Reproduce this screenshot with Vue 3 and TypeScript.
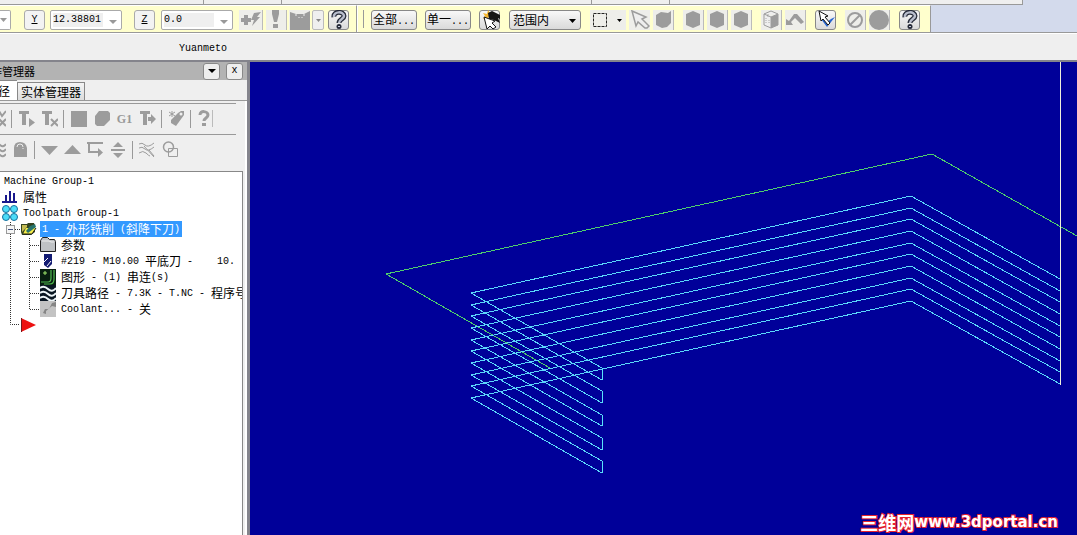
<script setup lang="ts">
import { ref } from 'vue'

interface Part { text: string; cjk?: boolean }
interface TreeRow { id: string; level: number; icon?: string; parts: Part[]; selected?: boolean }
interface Tool { icon: string; label: string; cls?: string }

const yValue = ref('12.38801')
const zValue = ref('0.0')
const range = ref('in')

const hexagon = '<path d="M10 1 17 4V15L10 18 3 15V4Z" fill="#9c9c9c"/>'
const tee = '<path d="M1 1H11V4H8V15H4V4H1Z" fill="#9c9c9c"/>'

const icons: Record<string, string> = {
  flash: '<path d="M4 5H8V8H11V12H8V15H4V12H1V8H4ZM14 3 21 2 17 7H20L12 16 14 10H11Z" fill="#9c9c9c"/>',
  bang: '<path d="M6 0H13V4L11 12H8L6 4ZM7 14H12V18H7Z" fill="#9c9c9c"/>',
  cam: '<path d="M0 2 6 4H14L20 1V20H0Z" fill="#9c9c9c"/><path d="M6 4V6M9 7V8M12 7V8M14 4V6" stroke="#eee"/>',
  help: '<path d="M5 7C4 1 15 1 15 6C15 9 10 9 10 13" fill="none" stroke="#252a38" stroke-width="5"/><path d="M5 7C4 1 15 1 15 6C15 9 10 9 10 13" fill="none" stroke="#b8bdcc" stroke-width="2.500"/><circle cx="10" cy="16.500" r="2.500" fill="#252a38"/><path d="M9 16.500H11" stroke="#c8ccdb"/>',
  chain: '<path d="M3 3 7 4 8 0 11 4 8 8 3 9 5 6Z" fill="#f6b62f"/><path d="M8 3 12 1 20 5V9L18 8 20 13 14 10 9 9Z" fill="#161616"/><path d="M4 7 7 19 10 16 13 19 16 17 12 13 15 11Z" fill="#fff" stroke="#111"/>',
  marquee: '<rect x="3.5" y="3.5" width="13" height="13" fill="none" stroke="#222" stroke-dasharray="3 1"/>',
  cursor: '<path d="M2 1 16 7 12 9 19 16 17 18 15 18 8 12 6 16Z" fill="#eee" stroke="#9c9c9c" stroke-width="1.5"/>',
  solid: '<path d="M3 5 8 2 15 3 18 1V13L14 17 9 18 3 15Z" fill="#9c9c9c"/>',
  hexagon,
  cube: '<path d="M10 1 17 4V15L10 18 3 15V4ZM3 4 10 7 17 4M10 7V18" fill="#eee" stroke="#9c9c9c"/><path d="M10 7 17 4V15L10 18Z" fill="#9c9c9c"/><path d="M5 8V13M7 4V8M8 10V14" stroke="#aaa" stroke-dasharray="1 1"/>',
  back: '<path d="M1 9V15H8L6 12 10 8 16 14 19 12 12 4H9L4 11Z" fill="#9c9c9c"/>',
  verify: '<path d="M5 9 11 17 19 7 15 9 11 12 7 8Z" fill="#2765cf"/><path d="M3 1 12 6 9 7 14 13 12 15 7 9 5 11Z" fill="#fff" stroke="#111"/>',
  no: '<circle cx="10" cy="10" r="7" fill="none" stroke="#9c9c9c" stroke-width="2"/><path d="M5 15 15 5" stroke="#9c9c9c" stroke-width="2"/>',
  disc: '<circle cx="10" cy="10" r="10" fill="#9c9c9c"/>',
  teePlay: tee + '<path d="M11 8 17 12.5 11 17Z" fill="#9c9c9c"/>',
  teeX: tee + '<path d="M10 9 17 16M17 9 10 16" stroke="#9c9c9c" stroke-width="2"/>',
  teeArrow: tee + '<path d="M9 7H12V4L17 9 12 14V11H9Z" fill="#9c9c9c"/>',
  cutX: '<path d="M10 1 13 6 17 1M10 9 17 16M17 9 10 16" fill="none" stroke="#9c9c9c" stroke-width="2"/>',
  square: '<path d="M1 1H17V17H1Z" fill="#9c9c9c"/>',
  block: '<path d="M6 1H15L17 3V10L11 16H4L2 14V6Z" fill="#9c9c9c"/>',
  pen: '<path d="M10 3 13 1H16V5L8 16 3 13V10Z" fill="#9c9c9c"/><path d="M1 2 7 6M4 1V7M1 6 7 2" stroke="#9c9c9c"/><circle cx="13" cy="4" r="1.5" fill="#eee"/>',
  ask: '<path d="M3 5C3 0 11 1 11 5C11 8 7 8 7 11" fill="none" stroke="#9c9c9c" stroke-width="3"/><rect x="5" y="13" width="4" height="3" fill="#9c9c9c"/><path d="M15.5 0V17" stroke="#bbb"/>',
  wave: '<path d="M5 4Q8 1 11 4T17 3M5 9Q8 6 11 9T17 8M5 14Q8 11 11 14T17 13" fill="none" stroke="#9c9c9c" stroke-width="2"/>',
  lock: '<path d="M2 16V7Q2 1 8 1T15 7V16Z" fill="#9c9c9c"/><path d="M5 6Q5 3 8 3T11 6M11 7V8" fill="none" stroke="#eee"/>',
  down: '<path d="M0 5H17L8.500 14Z" fill="#9c9c9c"/>',
  up: '<path d="M0 13H17L8.500 4Z" fill="#9c9c9c"/>',
  loop: '<path d="M0 2H16M2 2V11H13" fill="none" stroke="#9c9c9c" stroke-width="2"/><path d="M11 7 16 11.500 11 16Z" fill="#9c9c9c"/>',
  split: '<path d="M3 6 8 1 13 6ZM1 8H15V10H1ZM3 12 8 17 13 12Z" fill="#9c9c9c"/>',
  waves: '<path d="M0 3Q3 1 6 4T15 2M0 7Q3 5 6 8T15 6M0 12Q4 9 7 12T11 15M10 9 15 15M5 5 15 16" fill="none" stroke="#9c9c9c"/>',
  shapes: '<circle cx="6.500" cy="6" r="5" fill="none" stroke="#9c9c9c" stroke-width="1.500"/><path d="M6.500 7.500H15.500V15.500H6.500Z" fill="none" stroke="#9c9c9c"/>',
  bars: '<path d="M0 13H15M4 6V13M8 2V13M12 4V13" stroke="#18188c" stroke-width="2" fill="none"/>',
  dots: '<g fill="#4cdcf8" stroke="#176f9c"><circle cx="4" cy="4" r="3.500"/><circle cx="12" cy="4" r="3.500"/><circle cx="4" cy="12" r="3.500"/><circle cx="12" cy="12" r="3.500"/></g>',
  folderOpen: '<path d="M0 3H6L7 2H13L14 5V11L10 14H1L0 11Z" fill="#34421f"/><path d="M1 4H6V6L1 11Z" fill="#c4bb53"/><path d="M5 7H15L11 13H2Z" fill="#f6ed49"/><path d="M9 5 14 3 15 6 7 12 5 10Z" fill="#28736b"/><path d="M2 13H11L15 7" fill="none" stroke="#191919"/>',
  folder: '<path d="M.5 3.500 2.500.500H7.500L9.500 2.500H14.500L15.500 4.500V14.500H.500Z" fill="#bfc2c5" stroke="#222"/><path d="M2 4H9L11 5H14" fill="none" stroke="#eee"/>',
  mill: '<path d="M4 1H12V11L8 15 4 12Z" fill="#131b73"/><path d="M4 9 8 5M7 13 11 8" stroke="#fff"/>',
  geometry: '<path d="M0 0H16V16H0Z" fill="#071d10"/><path d="M1 13H8Q11 13 11 9V1M4 15H10Q14 15 14 10V1" fill="none" stroke="#51bb50" stroke-width="1.200"/><path d="M3 4H7M5 2V6" stroke="#9ce36a"/>',
  path: '<path d="M0 0H16V16H0Z" fill="#091622"/><path d="M0 3Q4 0 8 4T16 3M0 8Q4 5 8 9T16 8M0 13Q4 10 8 14T16 13" fill="none" stroke="#edf5f8" stroke-width="2"/>',
  coolant: '<path d="M0 0H16V16H0Z" fill="#c3c3c3"/><path d="M16 1V6L12 5 6 10V13L3 12 5 8 9 8 12 2Z" fill="#858585"/>',
  end: '<path d="M0 1 15 8 0 15Z" fill="#ed1111"/><path d="M.500 1V15" stroke="#77181b"/>',
}

const selectTools: Tool[] = [
  { icon: 'cursor', label: '选择', cls: 'flat' },
  { icon: 'solid', label: '实体', cls: 'flat sep' },
  { icon: 'hexagon', label: '边界', cls: 'flat sep far' },
  { icon: 'hexagon', label: '面', cls: 'flat sep' },
  { icon: 'hexagon', label: '主体', cls: 'flat sep' },
  { icon: 'cube', label: '背面', cls: 'flat sep far' },
  { icon: 'back', label: '返回', cls: 'flat sep' },
  { icon: 'verify', label: '验证', cls: 'raised far' },
  { icon: 'no', label: '取消', cls: 'flat sep far' },
  { icon: 'disc', label: '结束', cls: 'flat sep' },
  { icon: 'help', label: '帮助', cls: 'raised far' },
]

const topTools: string[] = ['cutX', '|', 'teePlay', 'teeX', '|', 'square', 'block', 'G1', 'teeArrow', '|', 'pen', '|', 'ask']
const lowTools: string[] = ['wave', 'lock', '|', 'down', 'up', 'loop', 'split', '|', 'waves', 'shapes']

const c = (text: string): Part => ({ text, cjk: true })
const l = (text: string): Part => ({ text })

const rows: TreeRow[] = [
  { id: 'machine', level: 0, parts: [l('Machine Group-1')] },
  { id: 'props', level: 1, icon: 'bars', parts: [c('属性')] },
  { id: 'group', level: 1, icon: 'dots', parts: [l('Toolpath Group-1')] },
  { id: 'op', level: 2, icon: 'folderOpen', selected: true, parts: [l('1 - '), c('外形铣削'), l(' ('), c('斜降下刀'), l(')')] },
  { id: 'params', level: 3, icon: 'folder', parts: [c('参数')] },
  { id: 'tool', level: 3, icon: 'mill', parts: [l('#219 - M10.00 '), c('平底刀'), l(' -    10.')] },
  { id: 'geo', level: 3, icon: 'geometry', parts: [c('图形'), l(' - (1) '), c('串连'), l('(s)')] },
  { id: 'nc', level: 3, icon: 'path', parts: [c('刀具路径'), l(' - 7.3K - T.NC - '), c('程序号')] },
  { id: 'cool', level: 3, icon: 'coolant', parts: [l('Coolant... - '), c('关')] },
  { id: 'insert', level: 2, icon: 'end', parts: [] },
]

const levels = Array.from({ length: 10 }, (_, i) => Math.round((i * 35) / 3))
const passes = levels.map(d => `602,${368 + d} 471,${293 + d} 911,${196 + d} 1060,${279 + d}`)
const links = [0, 2, 4, 6, 8].map(i => ({ y1: 368 + levels[i], y2: 368 + levels[i + 1] }))
</script>

<template>
  <div class="app">
    <div class="strip">
      <div class="strip-bar"><i class="w1"></i><i class="w2"></i><i class="w3"></i><i class="w4"></i><i class="w5"></i></div>
    </div>

    <header class="toolbar">
      <div class="group coords">
        <button class="stub" aria-label="X"><svg width="7" height="4" viewBox="0 0 7 4"><path d="M0 0H7L3.500 4Z" fill="#999" /></svg></button>
        <label class="axis" for="y-field"><u>Y</u></label>
        <div class="combo">
          <input id="y-field" v-model="yValue" />
          <button aria-label="Y 历史"><svg width="8" height="4" viewBox="0 0 8 4"><path d="M0 0H8L4 4Z" fill="#999" /></svg></button>
        </div>
        <label class="axis z" for="z-field"><u>Z</u></label>
        <div class="combo">
          <input id="z-field" v-model="zValue" />
          <button aria-label="Z 历史"><svg width="8" height="4" viewBox="0 0 8 4"><path d="M0 0H8L4 4Z" fill="#999" /></svg></button>
        </div>
        <button class="tool flat sep flash" aria-label="快速点"><svg width="22" height="20" viewBox="0 0 22 20" v-html="icons.flash" /></button>
        <button class="tool flat sep" aria-label="相对点"><svg width="20" height="20" viewBox="0 0 20 20" v-html="icons.bang" /></button>
        <button class="tool flat" aria-label="配置"><svg width="20" height="20" viewBox="0 0 20 20" v-html="icons.cam" /></button>
        <button class="drop" aria-label="更多"><svg width="5" height="3" viewBox="0 0 5 3"><path d="M0 0H5L2.500 3Z" fill="#888" /></svg></button>
        <button class="tool raised" aria-label="帮助"><svg width="20" height="20" viewBox="0 0 20 20" v-html="icons.help" /></button>
      </div>
      <div class="group selection">
        <button class="word"><span class="cjk">全部</span>...</button>
        <button class="word"><span class="cjk">单一</span>...</button>
        <button class="tool raised" aria-label="串连选择"><svg width="20" height="20" viewBox="0 0 20 20" v-html="icons.chain" /></button>
        <div class="range">
          <select v-model="range" aria-label="选择范围"><option value="in">范围内</option></select>
          <svg width="7" height="4" viewBox="0 0 7 4"><path d="M0 0H7L3.500 4Z" fill="#000" /></svg>
        </div>
        <button class="tool flat marquee" aria-label="窗选">
          <svg width="20" height="20" viewBox="0 0 20 20" v-html="icons.marquee" />
          <svg width="5" height="3" viewBox="0 0 5 3"><path d="M0 0H5L2.500 3Z" fill="#000" /></svg>
        </button>
        <button v-for="(t, i) in selectTools" :key="i" class="tool" :class="t.cls" :aria-label="t.label">
          <svg width="20" height="20" viewBox="0 0 20 20" v-html="icons[t.icon]" />
        </button>
      </div>
    </header>

    <div class="ribbon">Yuanmeto</div>

    <main class="work">
      <aside class="manager">
        <div class="title">
          <span class="cjk caption">作管理器</span>
          <button aria-label="菜单"><svg width="8" height="4" viewBox="0 0 8 4"><path d="M0 0H8L4 4Z" fill="#000" /></svg></button>
          <button aria-label="关闭">x</button>
        </div>
        <nav class="tabs cjk">
          <button class="tab active"><span>径</span></button>
          <button class="tab">实体管理器</button>
        </nav>
        <div class="page">
          <div v-for="(set, n) in [topTools, lowTools]" :key="n" class="tools" :class="{ second: n === 1 }">
            <template v-for="(t, i) in set" :key="i">
              <i v-if="t === '|'" class="bar"></i>
              <button v-else-if="t === 'G1'" class="g1">G1</button>
              <button v-else :aria-label="t" :class="{ cut: i === 0 }"><svg width="17" height="18" viewBox="0 0 17 18" v-html="icons[t]" /></button>
            </template>
          </div>
          <div class="tree">
            <svg class="wires" width="60" height="160" viewBox="0 0 60 160">
              <path d="M10.500 50V152.500H20M15 57.500H20M29.500 66V137.500H39M30 73.500H39M30 89.500H39M30 105.500H39M30 121.500H39" fill="none" stroke="#333" stroke-dasharray="1 1" />
            </svg>
            <div v-for="r in rows" :key="r.id" class="row" :class="'level' + r.level">
              <button v-if="r.id === 'op'" class="expander" aria-label="折叠"></button>
              <svg v-if="r.icon" width="16" height="16" viewBox="0 0 16 16" v-html="icons[r.icon]" />
              <span v-if="r.parts.length" class="label" :class="{ selected: r.selected }"><span v-for="(p, i) in r.parts" :key="i" :class="p.cjk ? 'cjk' : 'latin'">{{ p.text }}</span></span>
            </div>
          </div>
        </div>
      </aside>

      <section class="viewport">
        <svg class="scene" viewBox="250 62 827 473" preserveAspectRatio="xMinYMin meet" shape-rendering="crispEdges" fill="none">
          <path d="M1077 236 932 154 386 274 550 368" stroke="#4fcf6c" />
          <polyline v-for="p in passes" :key="p" :points="p" stroke="#5cd8fa" />
          <path v-for="k in links" :key="k.y1" :d="`M602.500 ${k.y1}V${k.y2}`" stroke="#58e2fa" />
          <path d="M1060.500 62V385" stroke="#f0f0dc" />
        </svg>
        <div class="mark"><span class="cjk">三维网</span>www.3dportal.cn</div>
      </section>
    </main>
  </div>
</template>

<style>
body { margin: 0; overflow: hidden; }
</style>

<style scoped>
* { box-sizing: border-box; }
.app {
  display: flex; flex-direction: column; height: 100vh; overflow: hidden;
  font: 10px/16px "Liberation Mono", "Noto Sans CJK SC", monospace; color: #000; background: #efefef;
}
button, input, select { font: inherit; color: inherit; padding: 0; margin: 0; border: 0; background: none; }
svg { display: block; flex: none; }
.cjk { font-family: "Noto Sans CJK SC", sans-serif; font-size: 12px; }

.strip { height: 5px; background: #d3daec; flex: none; }
.strip-bar { display: flex; width: 1023px; height: 5px; background: #efefef; border-bottom: 1px solid #999; }
.strip-bar i { border-right: 1px solid #999; }
.w1 { width: 204px; } .w2 { width: 78px; } .w3 { width: 310px; } .w4 { width: 78px; } .w5 { flex: 1; }

.toolbar { display: flex; height: 28px; flex: none; background: #d3daec; border-bottom: 1px solid #999; }
.group { display: flex; align-items: center; background: #ffffcd; border-right: 1px solid #999; border-top: 1px solid #fff; padding-top: 2px; }
.coords { width: 357px; }
.selection { width: 574px; padding-left: 13px; position: relative; border-left: 1px solid #fff; }
.selection::before { content: ""; position: absolute; left: 5px; top: 4px; width: 1px; height: 18px; background: #999; }
.stub { width: 11px; height: 20px; border: 1px solid #aaa; border-left: 0; background: #fff; border-radius: 0 2px 2px 0; overflow: hidden; }
.axis { width: 21px; height: 20px; margin: 0 5px 0 13px; border: 1px solid #aaa; border-radius: 3px; background: #f3f3f3; text-align: center; line-height: 18px; }
.axis.z { margin-right: 6px; margin-left: 12px; }
.combo { display: flex; width: 72px; height: 20px; border: 1px solid #aaa; border-radius: 2px; background: #fff; padding: 2px; }
.combo input { width: 50px; min-width: 0; background: #efefef; }
.combo button { flex: 1; display: grid; place-items: center; padding: 4px 0 0 4px; }
.tool { display: flex; align-items: center; justify-content: center; width: 21px; height: 20px; margin-right: 3px; flex: none; }
.flat { background: #eeeeea; }
.sep { border-right: 1px solid #bbb; }
.far { margin-left: 6px; }
.raised { border: 1px solid #888; border-radius: 3px; background: linear-gradient(#f8f8f8, #dadada); }
.flash { width: 24px; margin-left: 6px; }
.drop { width: 12px; height: 20px; display: grid; place-items: center; border: 1px solid #bbb; border-radius: 2px; background: #efefef; margin-right: 4px; }
.coords > .flat:not(.flash) { margin-right: 2px; }
.coords .flash { margin-right: 3px; }
.coords .raised { margin-right: 0; }
.word { width: 46px; height: 20px; margin-right: 8px; border: 1px solid #888; border-radius: 3px; background: linear-gradient(#f8f8f8, #dadada); line-height: 16px; white-space: nowrap; }
.range { position: relative; margin: 0 9px 0 6px; }
.range select { display: block; width: 72px; height: 20px; padding-left: 3px; border: 1px solid #888; border-radius: 3px; background: linear-gradient(#f8f8f8, #dadada); appearance: none; font: 12px/18px "Noto Sans CJK SC", sans-serif; }
.range svg { position: absolute; right: 5px; top: 9px; }
.marquee { width: 36px; gap: 7px; justify-content: flex-start; }

.ribbon { height: 29px; flex: none; border-top: 1px solid #fff; border-bottom: 2px solid #84848c; padding: 7px 0 0 179px; line-height: 16px; }

.work { display: flex; flex: 1; min-height: 0; }
.manager { width: 250px; flex: none; display: flex; flex-direction: column; background: #efefef; border-right: 3px solid #84848c; overflow: hidden; }
.title { display: flex; align-items: center; gap: 6px; height: 18px; padding-right: 4px; background: #b3b3b3; flex: none; line-height: 14px; }
.caption { flex: 1; margin-left: -9px; font-size: 11px; }
.title button { display: grid; place-items: center; width: 17px; height: 17px; border: 1px solid #888; border-radius: 3px; background: #eee; line-height: 14px; }
.tabs { display: flex; align-items: flex-end; height: 21px; flex: none; border-bottom: 1px solid #999; line-height: 16px; }
.tab { height: 18px; padding: 0 3px; border: 1px solid #888; border-bottom: 0; background: linear-gradient(#f4f4f4, #dcdcdc); white-space: nowrap; }
.tab.active { width: 17px; height: 20px; background: #fff; border-left: 0; border-right: 0; padding: 0; text-align: left; }
.tab.active span { margin-left: -2px; }
.page { display: flex; flex-direction: column; flex: 1; min-height: 0; padding: 2px 2px 0 0; border-right: 2px solid #fff; }
.tools { display: flex; align-items: center; gap: 6px; height: 31px; margin-right: 7px; border-top: 1px solid #999; flex: none; }
.tools.second { height: 37px; padding-bottom: 6px; }
.tools button { flex: none; width: 17px; }
.tools .cut { width: 6px; overflow: hidden; display: flex; justify-content: flex-end; }
.bar { width: 1px; height: 18px; margin-left: -1px; background: #999; }
.tools .g1 { font: bold 12px/18px "Liberation Serif", serif; color: #999; }
.tree { position: relative; flex: 1; min-height: 0; background: #fff; border: 1px solid #888; border-left: 0; border-bottom: 0; overflow: hidden; padding-top: 1px; }
.wires { position: absolute; left: 0; top: 0; }
.row { position: relative; display: flex; align-items: center; height: 16px; white-space: pre; }
.level0 { padding-left: 4px; }
.level1 { padding-left: 2px; gap: 5px; }
.level2 { padding-left: 21px; gap: 3px; }
.level3 { padding-left: 40px; gap: 5px; }
.label { display: flex; align-items: center; height: 16px; }
.latin { padding-top: 2px; }
.selected { background: #3399ff; color: #fff; padding: 0 2px; }
.expander { position: absolute; left: 6px; top: 4px; width: 9px; height: 9px; border: 1px solid #999; background: linear-gradient(#44527e, #44527e) center / 5px 1px no-repeat #f6f6f6; }

.viewport { position: relative; flex: 1; min-width: 0; background: #000099; overflow: hidden; }
.scene { width: 100%; height: 100%; }
.mark {
  position: absolute; right: 19px; bottom: 5px; display: flex; align-items: center; line-height: 16px;
  font-family: "DejaVu Sans", sans-serif; font-size: 15px; font-weight: bold; color: #fff;
  -webkit-text-stroke: 2px #e8222c; paint-order: stroke fill;
}
.mark .cjk { font-size: 18px; }
</style>
